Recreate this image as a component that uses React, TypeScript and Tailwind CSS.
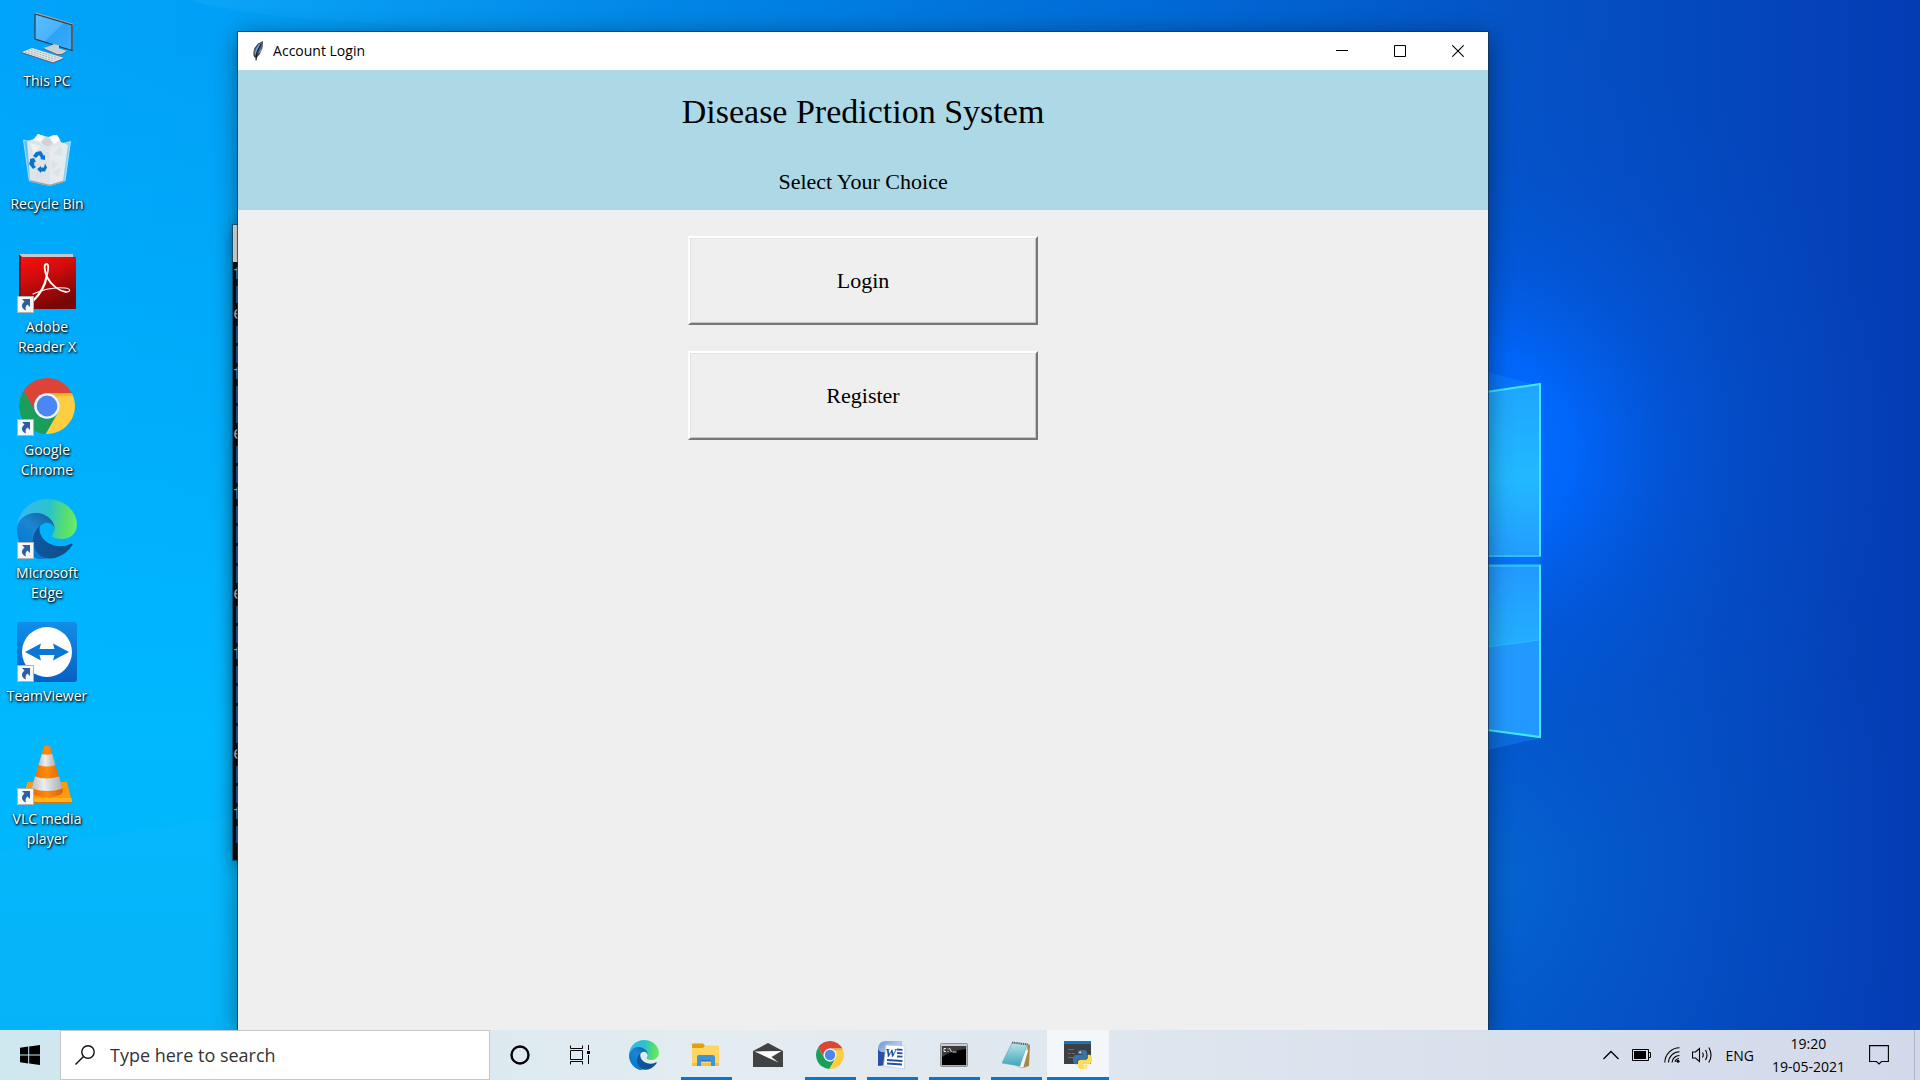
import React, { useId } from "react";

const UI = "font-['Open_Sans','Noto_Sans',sans-serif]";

function ChromeIcon({ size }: { size: number }) {
  return (
    <svg width={size} height={size} viewBox="0 0 48 48" aria-hidden="true">
      <path fill="#db4437" d="M45.3 13H24A11 11 0 0 0 14.5 29.5L3.8 11.05A24 24 0 0 1 45.3 13Z" />
      <path fill="#1a9e5c" d="M3.8 11.05L14.5 29.5A11 11 0 0 0 33.5 29.5L22.9 47.95A24 24 0 0 1 3.8 11.05Z" />
      <path fill="#ffcd40" d="M22.9 47.95L33.5 29.5A11 11 0 0 0 24 13H45.3A24 24 0 0 1 22.9 47.95Z" />
      <path fill="#000" opacity=".1" d="M24 13H45.3L46 15.5L30 16Z" />
      <circle cx="24" cy="24" r="11" fill="#f3f3f3" />
      <circle cx="24" cy="24" r="8.9" fill="#4a86f4" />
    </svg>
  );
}

function EdgeIcon({ size }: { size: number }) {
  const id = useId();
  return (
    <svg width={size} height={size} viewBox="0 0 256 256" aria-hidden="true">
      <defs>
        <linearGradient id={id + "a"} x1="60" y1="177" x2="240" y2="177" gradientUnits="userSpaceOnUse">
          <stop offset="0" stopColor="#0c59a4" />
          <stop offset="1" stopColor="#124a86" />
        </linearGradient>
        <linearGradient id={id + "b"} x1="150" y1="90" x2="30" y2="230" gradientUnits="userSpaceOnUse">
          <stop offset="0" stopColor="#1567ab" />
          <stop offset=".4" stopColor="#1b86d2" />
          <stop offset="1" stopColor="#0078d4" />
        </linearGradient>
        <linearGradient id={id + "c"} x1="10" y1="80" x2="250" y2="110" gradientUnits="userSpaceOnUse">
          <stop offset="0" stopColor="#35b8f5" />
          <stop offset=".5" stopColor="#2ac3c9" />
          <stop offset=".85" stopColor="#5be168" />
          <stop offset="1" stopColor="#66eb6e" />
        </linearGradient>
      </defs>
      <path fill={`url(#${id}a)`} d="M231 190.5c-3.4 1.8-6.9 3.4-10.5 4.7a101.9 101.9 0 0 1-35.9 6.4c-47.3 0-88.5-32.5-88.5-74.3.1-11.4 6.4-21.9 16.4-27.3-42.8 1.8-53.8 46.4-53.8 72.5 0 74 68.1 81.4 82.8 81.4 7.9 0 19.8-2.3 27-4.6l1.3-.4a128.3 128.3 0 0 0 66.6-52.8 4 4 0 0 0-5.4-5.6z" />
      <path fill={`url(#${id}b)`} d="M105.7 246.6A79.2 79.2 0 0 1 83 225.3a80.7 80.7 0 0 1 29.5-120c3.2-1.5 8.5-4.1 15.6-4 10.1.1 19.6 4.9 25.7 13 4 5.4 6.3 11.9 6.4 18.7 0-.2 24.5-79.6-80-79.6-43.9 0-80 41.6-80 78.2-.2 19.3 4 38.5 12.1 56 27.6 58.8 94.8 87.6 156.4 67.1-21.1 6.6-44.1 3.7-62.9-8.1z" />
      <path fill={`url(#${id}c)`} d="M152.3 148.9c-.9 1-3.4 2.5-3.4 5.6 0 2.6 1.7 5.2 4.8 7.3 14.3 10 41.4 8.6 41.5 8.6 10.7 0 21.1-2.9 30.3-8.3a61.4 61.4 0 0 0 30.4-52.9c.3-22.4-8-37.3-11.3-43.9C223.5 23.9 177.7 0 128 0 58 0 1 56.2 0 126.2c.5-36.5 36.8-66 80-66 3.5 0 23.5.3 42 10 16.3 8.6 24.9 18.9 30.8 29.2 6.2 10.7 7.3 24.1 7.3 29.5s-2.7 13.3-7.8 20z" />
    </svg>
  );
}

function PcIcon() {
  return (
    <svg width="60" height="60" viewBox="0 0 60 60" aria-hidden="true">
      <defs>
        <linearGradient id="pc" x1="0" y1="0" x2="1" y2="1">
          <stop offset="0" stopColor="#5cc0ff" />
          <stop offset=".5" stopColor="#49b2fb" />
          <stop offset=".52" stopColor="#2ba2f8" />
          <stop offset="1" stopColor="#3aaefc" />
        </linearGradient>
      </defs>
      <path fill="#9aa3aa" d="M17 6l2-.7L56 16.5v26l-1.5 1z" />
      <path fill="url(#pc)" stroke="#2b3a47" strokeWidth="1.2" d="M18 7l37 11v25.5L18 32z" />
      <path fill="#c9d0d5" d="M26 41l7-2 4-2 5 1.5v3l8 2.5-5 3-6 .2z" />
      <path fill="#5b6a76" d="M26 41l14 6h5l5-3v1l-5 3h-5L26 42z" />
      <path fill="#e3e6e8" d="M4.700 45.300L15 41l32 10-11 4.500z" />
      <path fill="#566573" d="M4.700 45.300v1L36 56.500l11-4.500v-1l-11 4.500z" />
      <path stroke="#9aa2a8" strokeWidth=".8" strokeDasharray="2 1" fill="none" d="M8 45l29 9M11 43.700l29 9M14 42.500l29 9" />
    </svg>
  );
}

function BinIcon() {
  return (
    <svg width="60" height="60" viewBox="0 0 60 60" aria-hidden="true">
      <path fill="#e3e5e6" d="M10 11l7-2 4-5 6 2 5 1 4-2 5 1 3 6 7 3-5 36-14 4-19-5z" />
      <path fill="#fbfbfb" d="M21 4l6 2-3 6-8-2zM32 7l8-2 3 5-6 4zM13 13l10 3-6 9z" />
      <path fill="#cfd3d6" d="M24 12l5-5 3 1 4 6-7 3zM36 24l8-8 2 10zM35 42l10-5-4 10zM34 30l8 4-7 6z" />
      <path fill="#dcdfe1" d="M14 28l8 6-7 6zM20 40l8 5-9 4zM26 20l7 4-7 3z" />
      <path fill="#d5e4ec" fillOpacity=".42" stroke="#c9e6f7" strokeWidth=".8" d="M6.500 10L33 17l20.500-5.500L48 51l-15 4.500L12.300 51z" />
      <path fill="#fff" fillOpacity=".25" d="M33 17l20.500-5.500L48 51l-15 4z" />
      <path stroke="#9da4a8" strokeWidth="1.500" fill="none" d="M12.500 51L33 55.500 48 51" />
      <g fill="#0a74cc">
        <path d="M16 26l3-4 5-1 3 5 1-1 0 5-5-1 1.200-1-2.200-3-3 3z" />
        <path d="M13 29l4-1 2 4-1.500-.2L17 35l2 2-3 2-4-5 1-3z" />
        <path d="M20 39l4-3v1.500h3l1-4 2 4-2 4h-4v1.500z" />
      </g>
    </svg>
  );
}

function AdobeIcon() {
  return (
    <svg width="60" height="60" viewBox="0 0 60 60" aria-hidden="true">
      <defs>
        <linearGradient id="ad" x1="0" y1="0" x2=".4" y2="1">
          <stop offset="0" stopColor="#f91010" />
          <stop offset=".4" stopColor="#d40c0c" />
          <stop offset="1" stopColor="#7a0606" />
        </linearGradient>
      </defs>
      <path fill="#c4c8ca" d="M2 1h54v4H2z" />
      <path fill="#8c0b0b" d="M2 1l3 3v52H2z" />
      <path fill="url(#ad)" d="M4 4h55v52H4z" />
      <g fill="none" stroke="#fff" strokeLinecap="round">
        <path strokeWidth="2.200" d="M16 48C22 42 28 33 29.500 24" />
        <path strokeWidth="1.800" d="M29.500 24C31.500 16 32 11 29.500 11C26.500 11 27.500 18 30 24C34 32 42 38 49 39" />
        <path strokeWidth="1.200" d="M49 39C54 39 54 35.500 48 35C38 34 25 37 16 41" />
      </g>
    </svg>
  );
}

function TeamViewerIcon() {
  return (
    <svg width="60" height="60" viewBox="0 0 60 60" aria-hidden="true">
      <defs>
        <linearGradient id="tv" x1="0" y1="0" x2="0" y2="1">
          <stop offset="0" stopColor="#118eea" />
          <stop offset="1" stopColor="#0560c5" />
        </linearGradient>
      </defs>
      <rect width="60" height="60" rx="3" fill="url(#tv)" />
      <circle cx="30" cy="30" r="25" fill="#fff" />
      <path fill="#0a76d8" d="M8 30L24 21.500l-1.500 5.500h15L36 21.500 52 30 36 38.500l1.500-5.500h-15L24 38.500z" />
    </svg>
  );
}

function VlcIcon() {
  return (
    <svg width="60" height="60" viewBox="0 0 60 60" aria-hidden="true">
      <defs>
        <linearGradient id="vo" x1="0" y1="0" x2="1" y2="0">
          <stop offset="0" stopColor="#e86a00" />
          <stop offset=".5" stopColor="#ff8a0a" />
          <stop offset="1" stopColor="#d96200" />
        </linearGradient>
        <linearGradient id="vw" x1="0" y1="0" x2="1" y2="0">
          <stop offset="0" stopColor="#b9bdc0" />
          <stop offset=".4" stopColor="#eceeef" />
          <stop offset="1" stopColor="#aaaeb1" />
        </linearGradient>
      </defs>
      <path fill="#fd9a10" d="M10.500 37H50l5 19.500H5z" />
      <path fill="#ffb31c" d="M6 53h48.500l.5 4.500H5z" />
      <path fill="#d97400" d="M5 57h50v1H5z" />
      <path fill="url(#vo)" d="M27 1.500c1-1.200 5-1.200 6 0L46 46c0 8-32 8-32 0z" />
      <path fill="url(#vw)" d="M24.800 9q5 1.500 10.400 0l3.300 11q-8 3-17 0z" />
      <path fill="url(#vw)" d="M18 31.500q12 4 24 0l3.500 12q-14 5-31 0z" />
    </svg>
  );
}

function ShortcutBadge() {
  return (
    <svg width="17" height="17" viewBox="0 0 17 17" className="absolute bottom-0 left-0" aria-hidden="true">
      <rect x=".5" y=".5" width="16" height="16" fill="#f7f7f7" stroke="#b4b4b4" />
      <path fill="#2d5da3" d="M5 3h8v8l-2.500-2.500C8.500 10 8 12 9 14.500 4.500 12.500 3.500 9 7.500 5.500z" />
    </svg>
  );
}

const shortcuts = [
  { name: "This PC", icon: <PcIcon />, link: false },
  { name: "Recycle Bin", icon: <BinIcon />, link: false },
  { name: "Adobe Reader X", icon: <AdobeIcon />, link: true },
  { name: "Google Chrome", icon: <ChromeIcon size={56} />, link: true },
  { name: "Microsoft Edge", icon: <EdgeIcon size={60} />, link: true },
  { name: "TeamViewer", icon: <TeamViewerIcon />, link: true },
  { name: "VLC media player", icon: <VlcIcon />, link: true },
];

function Wallpaper() {
  return (
    <svg className="absolute inset-0 h-full w-full" viewBox="0 0 1920 1030" preserveAspectRatio="xMidYMid slice" aria-hidden="true">
      <defs>
        <linearGradient id="w1" x1="0" y1="0" x2="1" y2="0">
          <stop offset="0" stopColor="#00a4fa" />
          <stop offset=".12" stopColor="#00a0f6" />
          <stop offset=".35" stopColor="#0086e6" />
          <stop offset=".6" stopColor="#006ad6" />
          <stop offset=".78" stopColor="#0454c6" />
          <stop offset="1" stopColor="#043cb4" />
        </linearGradient>
        <linearGradient id="w2" x1="0" y1="0" x2="0" y2="1">
          <stop offset="0" stopColor="#00b8ff" stopOpacity="0" />
          <stop offset=".7" stopColor="#00b8ff" />
          <stop offset="1" stopColor="#00b2f8" />
        </linearGradient>
        <radialGradient id="w3" cx="1480" cy="450" r="430" gradientUnits="userSpaceOnUse">
          <stop offset="0" stopColor="#0070ff" />
          <stop offset=".22" stopColor="#0068ff" stopOpacity=".9" />
          <stop offset=".45" stopColor="#035ae4" stopOpacity=".55" />
          <stop offset=".7" stopColor="#0450d0" stopOpacity=".3" />
          <stop offset="1" stopColor="#044cc8" stopOpacity="0" />
        </radialGradient>
        <radialGradient id="w4" cx="1440" cy="860" r="480" gradientUnits="userSpaceOnUse">
          <stop offset="0" stopColor="#056ad4" />
          <stop offset=".5" stopColor="#0558cc" stopOpacity=".5" />
          <stop offset="1" stopColor="#044cc0" stopOpacity="0" />
        </radialGradient>
        <linearGradient id="w5" x1="0" y1="0" x2="0" y2="1">
          <stop offset="0" stopColor="#1ea6ff" />
          <stop offset=".55" stopColor="#22b8ff" />
          <stop offset="1" stopColor="#229cff" />
        </linearGradient>
        <linearGradient id="w6" x1="0" y1="0" x2="0" y2="1">
          <stop offset="0" stopColor="#22b0ff" stopOpacity="0" />
          <stop offset="1" stopColor="#22b0ff" />
        </linearGradient>
        <linearGradient id="w7" x1="0" y1="0" x2="1" y2="0">
          <stop offset="0" stopColor="#fff" stopOpacity=".04" />
          <stop offset="1" stopColor="#fff" stopOpacity="0" />
        </linearGradient>
      </defs>
      <rect width="1920" height="1030" fill="url(#w1)" />
      <rect y="32" width="420" height="998" fill="url(#w2)" />
      <path fill="url(#w7)" d="M190 0Q230 12 300 18L500 32H700V0z" />
      <path fill="#fff" fillOpacity=".02" d="M0 850L240 815V1030H0z" />
      <rect x="1400" width="520" height="1030" fill="url(#w4)" />
      <rect x="1400" width="520" height="1030" fill="url(#w3)" />
      <path fill="#1a90ff" fillOpacity=".35" d="M1480 370L1540 386V738L1480 752z" />
      <path fill="url(#w5)" d="M1480 393L1541 383V557H1480z" />
      <path fill="#2299ff" d="M1480 564H1541V738L1480 729z" />
      <path fill="url(#w6)" d="M1480 566H1539V640L1480 648z" />
      <path fill="none" stroke="#2cc0ff" strokeWidth="2" d="M1480 556H1541M1480 566H1541" />
      <path fill="none" stroke="#2cbcff" strokeWidth="1" d="M1480 648L1539 640" />
      <path fill="none" stroke="#3fe8ff" strokeWidth="2" d="M1480 393L1540 384V556M1540 565V737L1480 729" />
    </svg>
  );
}

const consoleLines = "f[e[[f[[e[[f[[[[e[[f[[[[e[[f[".split("");

function ConsoleWindow() {
  return (
    <section
      aria-label="Console"
      className="absolute left-[calc(12.4%-5px)] top-[225px] w-80 overflow-hidden bg-[#0c0c0c] pb-4 shadow-[0_0_0_1px_rgba(40,60,80,0.6),0_2px_14px_rgba(0,0,0,0.35)]"
    >
      <div className="h-[37px] bg-[#ededed]" />
      <pre className="pt-0.5 font-['Liberation_Mono',monospace] text-lg leading-5 text-[#bdbdbd]">{consoleLines.join("\n")}</pre>
    </section>
  );
}

function FeatherIcon() {
  return (
    <svg width="20" height="20" viewBox="0 0 20 20" aria-hidden="true">
      <path fill="#3c4650" d="M15 0l-5 2.500L6.500 7 5 12l1 4 1.500 1 .5 2.500.8-3L12 13l2.500-6z" />
      <path fill="#6f9bd8" d="M14 1.500l-3.500 2L8 7.500 6.500 12l1 2L10 8z" />
      <path fill="#3f6fb8" d="M14.300 2L11 9 9 14l2.500-2L14 6.500z" />
      <path stroke="#111" strokeWidth=".9" fill="none" d="M13 3L9 11 8 19.500" />
      <path stroke="#b8c0c6" strokeWidth=".7" fill="none" d="M6 9l-.5 4M13.500 8L11.500 12" />
    </svg>
  );
}

const caption = "flex h-full w-[58px] items-center justify-center";

function ChoiceButton({ children }: { children: React.ReactNode }) {
  return (
    <button
      type="button"
      className="h-[89px] w-[350px] border-2 border-t-white border-l-white border-r-[#777777] border-b-[#777777] bg-[#efefef] text-[22px] leading-6 text-black shadow-[inset_1px_1px_0_#e4e4e4,inset_-1px_-1px_0_#c4c4c4]"
    >
      {children}
    </button>
  );
}

function LoginWindow() {
  return (
    <section
      aria-labelledby="window-title"
      className="absolute bottom-0 left-[12.4%] right-[22.5%] top-8 flex flex-col bg-[#efefef] shadow-[0_0_0_1px_rgba(20,50,80,0.75),0_4px_22px_rgba(0,0,0,0.45)]"
    >
      <div className="flex h-[38px] items-center bg-white pl-2.5 pr-px">
        <FeatherIcon />
        <span id="window-title" className={`${UI} ml-[5px] flex-1 text-[14px] leading-5 text-black`}>Account Login</span>
        <button type="button" aria-label="Minimize" className={caption}>
          <svg width="12" height="12" viewBox="0 0 12 12"><path fill="#000" d="M0 5h12v1H0z" /></svg>
        </button>
        <button type="button" aria-label="Maximize" className={caption}>
          <svg width="12" height="12" viewBox="0 0 12 12"><path fill="none" stroke="#000" d="M.5.500h11v11H.5z" /></svg>
        </button>
        <button type="button" aria-label="Close" className={caption}>
          <svg width="12" height="12" viewBox="0 0 12 12"><path fill="none" stroke="#000" strokeWidth="1.100" d="M.3.300l11.400 11.400M11.700.300L.3 11.700" /></svg>
        </button>
      </div>
      <div className="font-['Liberation_Serif',serif] text-black">
        <header className="flex flex-col items-center bg-[#add8e6] pb-4 pt-5 text-center">
          <h1 className="text-[34px] leading-[44px]">Disease Prediction System</h1>
          <p className="mt-9 text-[22px] leading-6">Select Your Choice</p>
        </header>
        <div className="flex flex-col items-center gap-[26px] pt-[26px]">
          <ChoiceButton>Login</ChoiceButton>
          <ChoiceButton>Register</ChoiceButton>
        </div>
      </div>
    </section>
  );
}

function CortanaIcon() {
  return (
    <svg width="20" height="20" viewBox="0 0 20 20" aria-hidden="true">
      <circle cx="10" cy="10" r="8.500" fill="none" stroke="#000" strokeWidth="2.400" />
    </svg>
  );
}

function TaskViewIcon() {
  return (
    <svg width="20" height="20" viewBox="0 0 20 20" aria-hidden="true">
      <path fill="none" stroke="#000" d="M.5 5.500h12v9H.5zM.5.500v3h12v-3M.5 19.500v-3h12v3M18.500 0v5M18.500 10v9" />
      <rect x="17" y="6" width="3" height="3" fill="#000" />
    </svg>
  );
}

function ExplorerIcon() {
  return (
    <svg width="28" height="24" viewBox="0 0 28 24" aria-hidden="true">
      <path fill="#e3a008" d="M0 1.500Q0 .5 1 .5h10l2 2-2 4H0z" />
      <path fill="#ffd564" d="M0 5h11l2.500-2.500H26q1 0 1 1V23H0z" />
      <path fill="#f7c13f" d="M0 20h27v3H0z" />
      <path fill="#3c94dc" d="M5 14q0-2 2-2h14q2 0 2 2v9h-4v-5H9v5H5z" />
      <path fill="#2577c8" d="M9 17h10v1.500H9z" />
    </svg>
  );
}

function MailIcon() {
  return (
    <svg width="30" height="24" viewBox="0 0 30 24" aria-hidden="true">
      <path fill="#404244" d="M0 8L15 0l15 8v16H0z" />
      <path fill="#fff" d="M1.500 8.500L28.500 8 18.500 14l7 5.500z" />
    </svg>
  );
}

function WordIcon() {
  return (
    <svg width="30" height="30" viewBox="0 0 30 30" aria-hidden="true">
      <defs>
        <linearGradient id="wd" x1="0" y1="0" x2="1" y2="1">
          <stop offset="0" stopColor="#6f96d6" />
          <stop offset=".5" stopColor="#b4caec" />
          <stop offset="1" stopColor="#1f4597" />
        </linearGradient>
      </defs>
      <path fill="url(#wd)" d="M1 8Q2 1 9 1h16v22L4 26 1 25z" />
      <path fill="#2750a3" d="M1 9q2 4 7 3v13l-7 1z" />
      <path fill="#fff" stroke="#b9c6da" strokeWidth=".7" d="M9 5l19 1-.5 23L6.500 26z" />
      <path stroke="#2750a3" strokeWidth="1.800" d="M20 9.500l5.500.3M20 13l5.500.3M20 16.500l5.500.2M10 20l15.500 1M10 23.500l15 1" />
      <text x="8" y="17" fontFamily="Liberation Serif, serif" fontStyle="italic" fontWeight="700" fontSize="13" fill="#1f4597">W</text>
    </svg>
  );
}

function CmdIcon() {
  return (
    <svg width="28" height="24" viewBox="0 0 28 24" aria-hidden="true">
      <rect x=".5" y=".5" width="27" height="23" rx="1" fill="#a9adb2" stroke="#8d9196" />
      <path fill="#c9ccd2" d="M1 1h26v2H1z" />
      <path fill="#000" d="M2 3h24v19H2z" />
      <path fill="#3b3b3b" d="M2 3h24v3Q10 8 2 14z" />
      <path stroke="#e4e4e4" fill="none" d="M6 5.500H4v3h2M8 5.500v1M8 8v1M9.500 5l2 4M12.500 9h4" />
    </svg>
  );
}

function NotepadIcon() {
  return (
    <svg width="30" height="28" viewBox="0 0 30 28" aria-hidden="true">
      <defs>
        <linearGradient id="np" x1="0" y1="0" x2="0" y2="1">
          <stop offset="0" stopColor="#b8e2e8" />
          <stop offset="1" stopColor="#3fa6bd" />
        </linearGradient>
      </defs>
      <path fill="#a8874f" d="M26 3l3 1-1 21-6 2z" />
      <path fill="#fdfdfd" stroke="#8f9699" strokeWidth=".6" d="M12 1l15 2-5 24-6-2z" />
      <path fill="url(#np)" stroke="#6aa3ad" strokeWidth=".6" d="M11 2l15 2-7 21-18-3z" />
      <path fill="#f4f6f6" d="M20 23l6-16 1 3-5 17z" />
      <path stroke="#555" strokeWidth="1.600" strokeDasharray="1.200 1" d="M11 1.500l16 2" />
    </svg>
  );
}

function PythonIcon() {
  return (
    <svg width="28" height="28" viewBox="0 0 28 28" aria-hidden="true">
      <path fill="#3d3f40" d="M0 0h27v23H0z" />
      <path fill="#0a78cf" d="M0 0h27v3H0z" />
      <path stroke="#3f8f3a" d="M4 8.500h6M4 12.500h3M8 12.500h3M4 16.500h6" />
      <g transform="translate(9 9) scale(.79)">
        <path fill="#3873a6" d="M14.250.18l.9.2.73.26.59.3.45.32.34.34.25.34.16.33.1.3.04.26.02.2-.01.13V8.500l-.05.63-.13.55-.21.46-.26.38-.3.31-.33.25-.35.19-.35.14-.33.1-.3.07-.26.04-.21.02H8.770l-.69.05-.59.14-.5.22-.41.27-.33.32-.27.35-.2.36-.15.37-.1.35-.07.32-.04.27-.02.21v3.060H3.170l-.21-.03-.28-.07-.32-.12-.35-.18-.36-.26-.36-.36-.35-.46-.32-.59-.28-.73-.21-.88-.14-1.050-.05-1.230.06-1.220.16-1.040.24-.87.32-.71.36-.57.4-.44.42-.33.42-.24.4-.16.36-.1.32-.05.24-.01h.16l.06.01h8.160v-.83H6.180l-.01-2.750-.02-.37.05-.34.11-.31.17-.28.25-.26.31-.23.38-.2.44-.18.51-.15.58-.12.64-.1.71-.06.77-.04.84-.02 1.270.05z" />
        <path fill="#ffdc50" d="M21.100 6.110l.28.06.32.12.35.18.36.27.36.35.35.47.32.59.28.73.21.88.14 1.040.05 1.230-.06 1.230-.16 1.040-.24.86-.32.71-.36.57-.4.45-.42.33-.42.24-.4.16-.36.09-.32.05-.24.02-.16-.01h-8.220v.82h5.840l.01 2.760.02.36-.05.34-.11.31-.17.29-.25.25-.31.24-.38.2-.44.17-.51.15-.58.13-.64.09-.71.07-.77.04-.84.01-1.270-.04-1.070-.14-.9-.2-.73-.25-.59-.3-.45-.33-.34-.34-.25-.34-.16-.33-.1-.3-.04-.25-.02-.2.01-.13v-5.340l.05-.64.13-.54.21-.46.26-.38.3-.32.33-.24.35-.2.35-.14.33-.1.3-.06.26-.04.21-.02.13-.01h5.840l.69-.05.59-.14.5-.21.41-.28.33-.32.27-.35.2-.36.15-.36.1-.35.07-.32.04-.28.02-.21V6.070h2.090l.14.01z" />
        <circle cx="9" cy="3" r="1.100" fill="#fff" />
        <circle cx="15.200" cy="21" r="1.100" fill="#fff" />
      </g>
    </svg>
  );
}

const apps = [
  { name: "Microsoft Edge", icon: <EdgeIcon size={30} />, state: "idle" },
  { name: "File Explorer", icon: <ExplorerIcon />, state: "open" },
  { name: "Mail", icon: <MailIcon />, state: "idle" },
  { name: "Google Chrome", icon: <ChromeIcon size={28} />, state: "open" },
  { name: "Word", icon: <WordIcon />, state: "open" },
  { name: "Command Prompt", icon: <CmdIcon />, state: "open" },
  { name: "Notepad", icon: <NotepadIcon />, state: "open" },
  { name: "Python", icon: <PythonIcon />, state: "active" },
];

function Tray() {
  return (
    <div className={`${UI} ml-auto flex h-full items-center text-[14px] text-black`}>
      <button type="button" aria-label="Show hidden icons" className="mr-3">
        <svg width="18" height="10" viewBox="0 0 18 10"><path fill="none" stroke="#000" strokeWidth="1.300" d="M1.500 9L9 1.500 16.500 9" /></svg>
      </button>
      <button type="button" aria-label="Battery" className="mr-3">
        <svg width="20" height="12" viewBox="0 0 20 12">
          <path fill="none" stroke="#000" d="M.5.500h16v11H.5zM16.500 3.500h2v5h-2" />
          <path fill="#000" d="M2 2h12v8H2z" />
        </svg>
      </button>
      <button type="button" aria-label="Network" className="mr-3">
        <svg width="16" height="16" viewBox="0 0 16 16">
          <path fill="none" stroke="#000" strokeWidth="1.100" d="M.8 15.500A15 15 0 0 1 15.500.8M4.500 15.500A11 11 0 0 1 15.500 4.800M8 15.500A7.500 7.500 0 0 1 15.500 8.500" />
          <path fill="none" stroke="#000" strokeWidth="1.100" d="M11 15Q11.500 12 15 11.500" />
          <circle cx="14" cy="14.300" r="1.500" fill="#000" />
        </svg>
      </button>
      <button type="button" aria-label="Volume" className="mr-3">
        <svg width="21" height="18" viewBox="0 0 21 18">
          <path fill="none" stroke="#000" strokeWidth="1.100" d="M.5 6h3L7.500 2.500v13L3.500 12h-3zM10.500 6.500q1.500 2.500 0 5M13.500 4q3 5 0 10M16.800 1.500q4.500 7.500 0 15" />
        </svg>
      </button>
      <button type="button" className="mr-[18px]">ENG</button>
      <button type="button" className="mr-6 text-center leading-[23px]">
        <span className="block">19:20</span>
        <span className="block">19-05-2021</span>
      </button>
      <button type="button" aria-label="Notifications" className="mr-[25px]">
        <svg width="20" height="20" viewBox="0 0 20 20"><path fill="none" stroke="#000" strokeWidth="1.100" d="M.6.600h18.800v15.900H12.500L10 19 7.500 16.500H.6z" /></svg>
      </button>
      <button type="button" aria-label="Show desktop" className="h-full w-1.5 border-l border-[#b0b7c6]" />
    </div>
  );
}

function Taskbar() {
  return (
    <footer className="relative flex h-[50px] shrink-0 items-center bg-linear-to-r from-[#cfe7ef] via-[#e4ecf1] via-40% to-[#d2d9ea]">
      <button type="button" aria-label="Start" className="flex h-full w-[60px] items-center justify-center">
        <svg width="20" height="20" viewBox="0 0 20 20"><path fill="#000" d="M0 2.800L8.200 1.500v8H0zM9.200 1.400L20 0v9.500H9.200zM0 10.500h8.200v8L0 17.300zM9.200 10.500H20V20L9.200 18.600z" /></svg>
      </button>
      <label className="flex h-full w-[430px] items-center border border-[#c6c6c6] bg-white pl-3.5">
        <svg width="20" height="20" viewBox="0 0 20 20" aria-hidden="true">
          <circle cx="13" cy="7" r="6.200" fill="none" stroke="#111" strokeWidth="1.400" />
          <path stroke="#111" strokeWidth="1.400" d="M8.500 11.500L.5 19.500" />
        </svg>
        <input
          type="text"
          aria-label="Search"
          placeholder="Type here to search"
          className={`${UI} ml-[15px] min-w-0 flex-1 bg-transparent text-[18px] leading-6 text-[#333333] outline-none placeholder:text-[#333333] placeholder:opacity-100`}
        />
      </label>
      <button type="button" aria-label="Cortana" className="flex h-full w-[60px] items-center justify-center"><CortanaIcon /></button>
      <button type="button" aria-label="Task View" className="mr-[3px] flex h-full w-[60px] items-center justify-center"><TaskViewIcon /></button>
      {apps.map((a) => (
        <button
          key={a.name}
          type="button"
          aria-label={a.name}
          className={`flex h-full w-[62px] flex-col items-center ${a.state === "active" ? "bg-[#f4f7fa]" : ""}`}
        >
          <span className="flex w-full flex-1 items-center justify-center pt-[3px]">{a.icon}</span>
          <span className={a.state === "active" ? "h-[3px] w-full bg-[#0078d7]" : a.state === "open" ? "h-[3px] w-[51px] bg-[#0078d7]" : "h-[3px]"} />
        </button>
      ))}
      <Tray />
    </footer>
  );
}

export default function App() {
  return (
    <div className="flex h-screen flex-col overflow-hidden">
      <main className="relative min-h-0 flex-1 overflow-hidden">
        <Wallpaper />
        <nav aria-label="Desktop" className={`${UI} relative flex w-[94px] flex-col`}>
          {shortcuts.map((s) => (
            <button key={s.name} type="button" className="flex h-[123px] flex-col items-center px-1 pt-[7px]">
              <span className="relative flex h-[60px] w-[60px] items-center justify-center">
                {s.icon}
                {s.link && <ShortcutBadge />}
              </span>
              <span className="mt-1 text-[14px] leading-5 text-white [text-shadow:1px_1px_2px_#000,0_1px_3px_rgba(0,0,0,0.8)]">{s.name}</span>
            </button>
          ))}
        </nav>
        <ConsoleWindow />
        <LoginWindow />
      </main>
      <Taskbar />
    </div>
  );
}
